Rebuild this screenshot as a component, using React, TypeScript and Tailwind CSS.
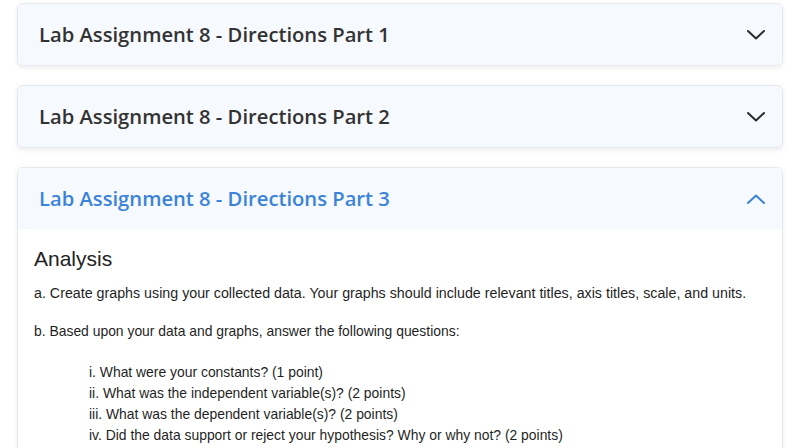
const parts = [
  { title: 'Lab Assignment 8 - Directions Part 1', open: false },
  { title: 'Lab Assignment 8 - Directions Part 2', open: false },
  { title: 'Lab Assignment 8 - Directions Part 3', open: true },
];

const questions = [
  'i. What were your constants? (1 point)',
  'ii. What was the independent variable(s)? (2 points)',
  'iii. What was the dependent variable(s)? (2 points)',
  'iv. Did the data support or reject your hypothesis? Why or why not? (2 points)',
];

function Chevron({ up }: { up: boolean }) {
  return (
    <svg
      width="20"
      height="12"
      viewBox="0 0 20 12"
      fill="none"
      stroke="currentColor"
      strokeWidth="2"
      strokeLinecap="round"
      strokeLinejoin="round"
      className={up ? 'text-[#3b83d9]' : 'text-[#2a2a2a]'}
    >
      {up ? <polyline points="2,10 10,2.5 18,10" /> : <polyline points="2,2 10,9.5 18,2" />}
    </svg>
  );
}

function Panel({ title, open }: { title: string; open: boolean }) {
  return (
    <div className="overflow-hidden rounded-md border border-[#e6e9ee] bg-white shadow-[0_2px_5px_rgba(0,0,0,0.08)]">
      <button className="flex h-[61px] w-full items-center justify-between bg-[#f6f9fe] pl-[21px] pr-[16px] text-left">
        <span
          className={`font-['Open_Sans',sans-serif] text-[20.2px] font-semibold ${
            open ? 'text-[#3b83d9]' : 'text-[#333333]'
          }`}
        >
          {title}
        </span>
        <Chevron up={open} />
      </button>
      {open && (
        <div className="px-[16px] pt-[16px] pb-6 font-['Liberation_Sans',Arial,sans-serif] text-[13.9px] leading-[21.3px] text-[#1f1f1f]">
          <h2 className="text-[21px] leading-[28px] text-[#222]">Analysis</h2>
          <p className="mt-[10px] text-[14.25px]">
            a. Create graphs using your collected data. Your graphs should include relevant titles, axis
            titles, scale, and units.
          </p>
          <p className="mt-[17px]">b. Based upon your data and graphs, answer the following questions:</p>
          <ul className="mt-[19px] pl-[55px]">
            {questions.map((q) => (
              <li key={q}>{q}</li>
            ))}
          </ul>
        </div>
      )}
    </div>
  );
}

export default function App() {
  return (
    <div className="h-[448px] overflow-hidden bg-white px-[12px] pt-[3px]">
      <div className="ml-[5px] flex w-[766px] flex-col gap-[19px]">
        {parts.map((p) => (
          <Panel key={p.title} title={p.title} open={p.open} />
        ))}
      </div>
    </div>
  );
}
